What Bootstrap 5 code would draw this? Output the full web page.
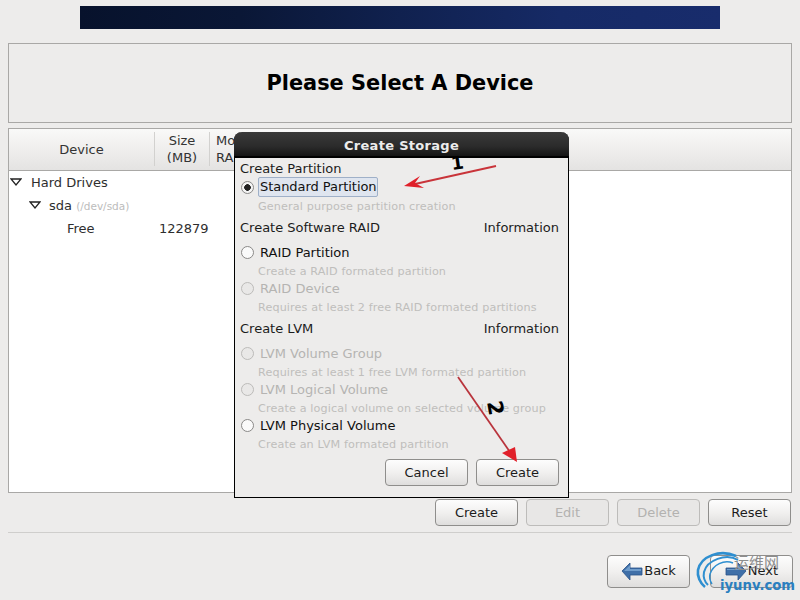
<!DOCTYPE html>
<html lang="en">
<head>
<meta charset="utf-8">
<title>Please Select A Device</title>
<link href="https://cdn.jsdelivr.net/npm/bootstrap@5.3.0/dist/css/bootstrap.min.css" rel="stylesheet">
<style>
html,body{height:600px;overflow:hidden}
body{background:#edeceb;color:#1c1c1c;font-family:"DejaVu Sans",sans-serif;font-size:13px;line-height:18px;width:800px;position:relative}
.shell{padding:6px 8px 0}
.banner{width:640px;height:23px;margin:0 auto 14px;background:linear-gradient(90deg,#07122c 0%,#0a1736 25%,#10214f 50%,#162a66 75%,#182c6c 100%)}
.title-box{height:80px;border:1px solid #a9a8a6;margin-bottom:5px}
.title-box h1{font-family:"DejaVu Sans",sans-serif;font-size:20.9px;font-weight:700;color:#000;margin:0;line-height:1}
.dev-box{height:365px;border:1px solid #a9a8a6;background:#fff;margin-bottom:6px}
.dev-head{height:42px;background:linear-gradient(180deg,#f9f9f8 0%,#efeeed 50%,#e4e3e2 100%);border-bottom:1px solid #a9a8a6;color:#333}
.hc{line-height:17px;border-right:1px solid #d2d1cf;height:34px;margin-top:3px}
.hc-dev{width:146px}
.hc-size{width:55px}
.hc-mount{padding-left:6px;border-right:0;white-space:nowrap}
.tree-row{position:relative;height:23px;line-height:23px;color:#2e2e2e;white-space:nowrap}
.tw{position:absolute;top:7px}
.tr1{padding-left:22px}.tr2{padding-left:40px}.tr3{padding-left:58px}
.tw1{left:1px}.tw2{left:20px}
.devpath{font-size:10.5px;color:#bcbcbc}
.size-val{position:absolute;left:150px}
.gbtn{width:83px;height:27px;padding:0;font-size:13px;line-height:25px;color:#1c1c1c;background:linear-gradient(180deg,#fdfdfd 0%,#f1f0ef 50%,#dfdedd 100%);border:1px solid #8f8e8c;border-radius:4px}
.gbtn:disabled{color:#b3b2b0;background:#e8e7e6;border-color:#bdbcba;opacity:1}
.gap8{gap:8px;padding-right:1px}
.divider{height:1px;background:#cfcecc;margin:6px 0 22px;border:0;opacity:1}
.navbtns{margin-right:-1px}
.navbtn{height:33px;display:inline-flex;align-items:center;justify-content:center;gap:1px;padding-bottom:2px}
.navback{margin-right:20px}
.dlg{position:absolute;left:234px;top:132px;width:335px;height:366px;background:#edeceb;border:1px solid #000;border-top:0;border-radius:8px 8px 0 0;padding-top:25px;font-size:13px}
.dlg-title{position:absolute;left:-1px;right:-1px;top:0;height:26px;background:linear-gradient(180deg,#3a3a3a 0%,#2b2b2b 60%,#151515 100%);border-bottom:2px solid #000;border-radius:8px 8px 0 0;color:#ececec;font-weight:700;font-size:13px;letter-spacing:.3px;text-align:center;line-height:27px}
.dlg-body{padding:2px 9px 0 5px}
.sect{height:18px;line-height:20px;color:#1c1c1c;white-space:nowrap}
.mt-s{margin-top:4px}
.mt-o{margin-top:7px}
.opt{height:18px;color:#111;display:flex;align-items:center;white-space:nowrap;margin-bottom:0}
.sect+.opt.first{margin-top:1px}
.opt.off{color:#b5b4b2}
.rad{appearance:none;-webkit-appearance:none;width:13px;height:13px;margin:0 6px 0 1px;border:1px solid #8a8988;border-radius:50%;background:#fafafa;flex:none}
.rad:checked{background:radial-gradient(circle,#222 0,#222 3px,#f4f4f4 3.6px)}
.rad:disabled{background:#e9e8e7;border-color:#bcbbb9}
.opt-lab{padding-top:1px}
.opt-lab.sel{background:#dfe5ef;border:1px solid #9fb0c8;border-radius:2px;margin-left:-2px;line-height:18px;height:20px;padding:0 0 0 1px;width:120px;letter-spacing:-.05px}
.dsc{height:16px;line-height:18px;margin-top:2px;padding-left:18px;font-size:11.2px;letter-spacing:.13px;color:#bfbebc;white-space:nowrap}
.dlg-btns{margin-top:7px;gap:8px;justify-content:flex-end;display:flex}
.overlay{position:absolute;left:0;top:0;pointer-events:none}
.ann{font-family:"DejaVu Sans",sans-serif;font-weight:700;font-size:18px;fill:#000}
.ann-big{font-size:21px}
.wm-cn{font-family:"Noto Sans CJK SC",sans-serif;font-size:15px;fill:#8d8d8d}
.wm-en{font-family:"DejaVu Sans",sans-serif;font-weight:700;font-size:13.2px;fill:#2a7fc0}
</style>
</head>
<body>
<div class="shell">
  <div class="banner"></div>
  <div class="title-box d-flex align-items-center justify-content-center"><h1>Please Select A Device</h1></div>
  <div class="dev-box">
    <div class="dev-head d-flex">
      <div class="hc hc-dev d-flex align-items-center justify-content-center">Device</div>
      <div class="hc hc-size text-center">Size<br>(MB)</div>
      <div class="hc hc-mount">Mount Point/<br>RAID/Volume</div>
    </div>
    <div class="tree">
      <div class="tree-row tr1"><svg class="tw tw1" width="12" height="9" viewBox="0 0 12 9"><path d="M1 1h10L6 7z" fill="#fff" stroke="#222" stroke-width="1.3"/></svg>Hard Drives</div>
      <div class="tree-row tr2"><svg class="tw tw2" width="12" height="9" viewBox="0 0 12 9"><path d="M1 1h10L6 7z" fill="#fff" stroke="#222" stroke-width="1.3"/></svg>sda <span class="devpath">(/dev/sda)</span></div>
      <div class="tree-row tr3">Free<span class="size-val">122879</span></div>
    </div>
  </div>
  <div class="d-flex justify-content-end gap8">
    <button class="btn gbtn">Create</button>
    <button class="btn gbtn" disabled>Edit</button>
    <button class="btn gbtn" disabled>Delete</button>
    <button class="btn gbtn">Reset</button>
  </div>
  <hr class="divider">
  <div class="d-flex justify-content-end navbtns">
    <button class="btn gbtn navbtn navback"><svg width="22" height="22" viewBox="0 0 22 22"><path d="M1 11 9 3v5h12v7H9v5z" fill="#3f6fa8" stroke="#2a5288" stroke-width=".8"/><path d="M3 11 9 5v4h11v2H8z" fill="#6f9ccb"/></svg>Back</button>
    <button class="btn gbtn navbtn"><svg width="22" height="22" viewBox="0 0 22 22"><path d="M21 11 13 3v5H1v7h12v5z" fill="#3f6fa8" stroke="#2a5288" stroke-width=".8"/><path d="M2 9h11V5l5 5H2z" fill="#6f9ccb"/></svg>Next</button>
  </div>
</div>

<div class="dlg">
  <div class="dlg-title">Create Storage</div>
  <div class="dlg-body">
    <div class="sect">Create Partition</div>
    <label class="opt first"><input class="rad" type="radio" name="t" checked><span class="opt-lab sel">Standard Partition</span></label>
    <div class="dsc">General purpose partition creation</div>
    <div class="sect mt-s d-flex justify-content-between"><span>Create Software RAID</span><span>Information</span></div>
    <label class="opt mt-o"><input class="rad" type="radio" name="t"><span class="opt-lab">RAID Partition</span></label>
    <div class="dsc">Create a RAID formated partition</div>
    <label class="opt off"><input class="rad" type="radio" name="t" disabled><span class="opt-lab">RAID Device</span></label>
    <div class="dsc">Requires at least 2 free RAID formated partitions</div>
    <div class="sect mt-s d-flex justify-content-between"><span>Create LVM</span><span>Information</span></div>
    <label class="opt off mt-o"><input class="rad" type="radio" name="t" disabled><span class="opt-lab">LVM Volume Group</span></label>
    <div class="dsc">Requires at least 1 free LVM formated partition</div>
    <label class="opt off"><input class="rad" type="radio" name="t" disabled><span class="opt-lab">LVM Logical Volume</span></label>
    <div class="dsc">Create a logical volume on selected volume group</div>
    <label class="opt"><input class="rad" type="radio" name="t"><span class="opt-lab">LVM Physical Volume</span></label>
    <div class="dsc">Create an LVM formated partition</div>
    <div class="dlg-btns">
      <button class="btn gbtn">Cancel</button>
      <button class="btn gbtn">Create</button>
    </div>
  </div>
</div>

<svg class="overlay" width="800" height="600" viewBox="0 0 800 600">
  <g>
    <line x1="496" y1="166" x2="415" y2="184" stroke="#c9343a" stroke-width="1.8"/>
    <path d="M404 186 420 176 415 183 424 188z" fill="#e0202a"/>
    <text class="ann" transform="translate(452 170) rotate(-8)">1</text>
    <line x1="458" y1="377" x2="510" y2="452" stroke="#b9343c" stroke-width="1.8"/>
    <path d="M517 462 502 453 515 447z" fill="#e0202a"/>
    <text class="ann ann-big" transform="translate(487 402) rotate(80)">2</text>
  </g>
  <g fill="none" stroke="#2f8fd0">
    <path d="M736 556C720 549 701 556 698 570 697 576 700 583 705 587" stroke-width="2.6"/>
    <path d="M738 560C726 553 707 560 704 572 703 577 705 582 708 585" stroke-width="2"/>
    <path d="M733 563C724 559 713 565 710 574 709 578 710 581 712 584" stroke-width="1.5"/>
  </g>
  <text class="wm-cn" x="734" y="568">运维网</text>
  <text class="wm-en" x="720" y="590">iyunv.com</text>
</svg>
</body>
</html>
